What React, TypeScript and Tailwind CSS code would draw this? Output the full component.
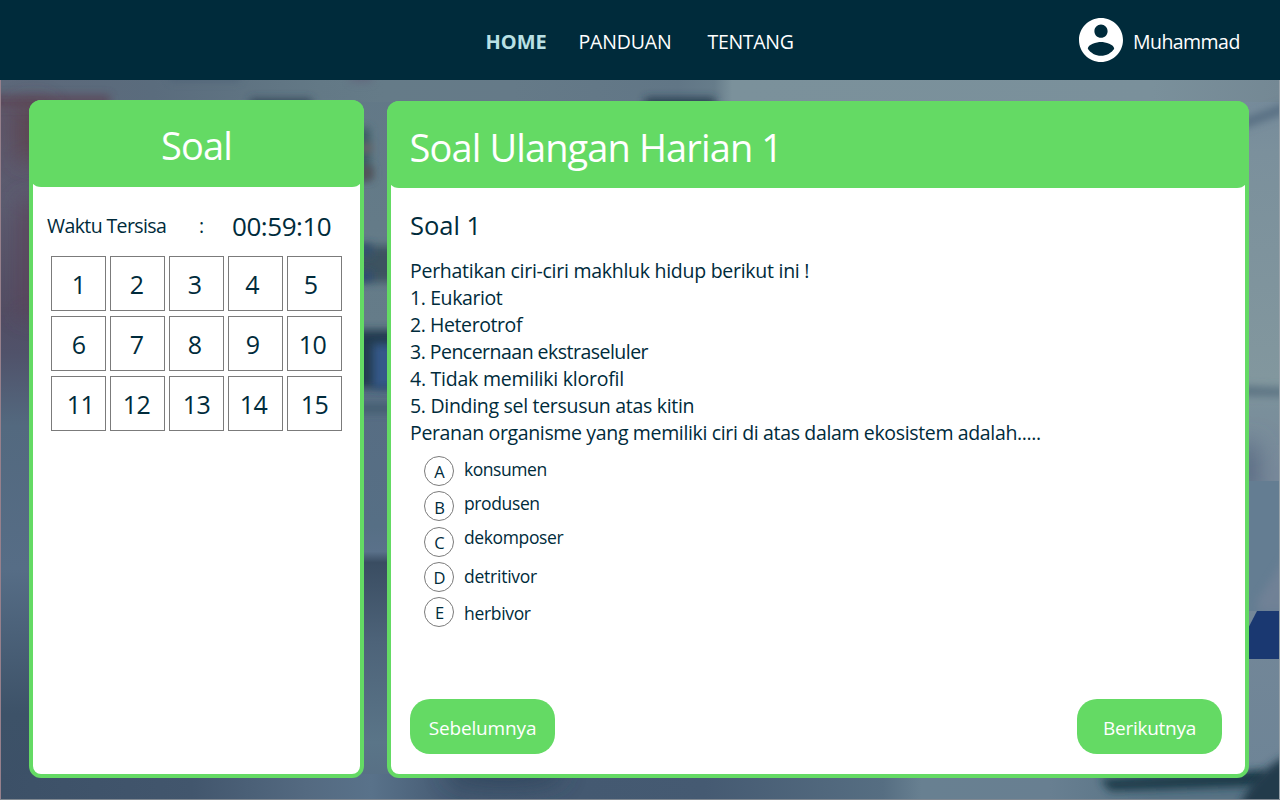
const numbers = [
  { n: '1', pad: '' },
  { n: '2', pad: 'pr-[2px]' },
  { n: '3', pad: 'pr-[4px]' },
  { n: '4', pad: 'pr-[7px]' },
  { n: '5', pad: 'pr-[8px]' },
  { n: '6', pad: '' },
  { n: '7', pad: 'pr-[2px]' },
  { n: '8', pad: 'pr-[4px]' },
  { n: '9', pad: 'pr-[6px]' },
  { n: '10', pad: 'pr-[4px]' },
  { n: '11', pad: 'pl-[4px]' },
  { n: '12', pad: 'pr-[2px]' },
  { n: '13', pad: '' },
  { n: '14', pad: 'pr-[4px]' },
  { n: '15', pad: '' },
];

const lines = [
  { t: 'Perhatikan ciri-ciri makhluk hidup berikut ini !', ls: 'tracking-[-0.27px]' },
  { t: '1. Eukariot', ls: 'tracking-[-0.4px]' },
  { t: '2. Heterotrof', ls: 'tracking-[-0.42px]' },
  { t: '3. Pencernaan ekstraseluler', ls: 'tracking-[-0.52px]' },
  { t: '4. Tidak memiliki klorofil', ls: 'tracking-[-0.24px]' },
  { t: '5. Dinding sel tersusun atas kitin', ls: 'tracking-[-0.3px]' },
  {
    t: 'Peranan organisme yang memiliki ciri di atas dalam ekosistem adalah.....',
    ls: 'tracking-[-0.35px]',
  },
];

const options = [
  { k: 'A', t: 'konsumen', ls: 'tracking-[-0.45px]', pad: 'pb-[4px]' },
  { k: 'B', t: 'produsen', ls: 'tracking-[-0.38px]', pad: 'pb-[7px]' },
  { k: 'C', t: 'dekomposer', ls: 'tracking-[-0.38px]', pad: 'pb-[9px]' },
  { k: 'D', t: 'detritivor', ls: 'tracking-[-0.24px]', pad: 'pb-[2px]' },
  { k: 'E', t: 'herbivor', ls: 'tracking-[-0.32px]', pad: 'pt-[2px]' },
];

function Backdrop() {
  return (
    <svg
      className="absolute inset-0 h-full w-full"
      viewBox="0 0 1280 720"
      preserveAspectRatio="none"
      aria-hidden="true"
    >
      <defs>
        <linearGradient id="left" x1="0" y1="0" x2="0" y2="1">
          <stop offset="0" stopColor="#5d6a7b" />
          <stop offset="0.05" stopColor="#5d5669" />
          <stop offset="0.17" stopColor="#5b5c70" />
          <stop offset="0.32" stopColor="#524d63" />
          <stop offset="0.38" stopColor="#50526a" />
          <stop offset="0.48" stopColor="#53697f" />
          <stop offset="0.68" stopColor="#566d86" />
          <stop offset="0.88" stopColor="#3d5268" />
          <stop offset="1" stopColor="#3c5067" />
        </linearGradient>
        <linearGradient id="mid" x1="0" y1="0" x2="0" y2="1">
          <stop offset="0" stopColor="#627887" />
          <stop offset="0.2" stopColor="#647b88" />
          <stop offset="0.35" stopColor="#657c89" />
          <stop offset="0.45" stopColor="#576d83" />
          <stop offset="0.62" stopColor="#566f85" />
          <stop offset="0.655" stopColor="#5a718a" />
          <stop offset="0.67" stopColor="#3a4d62" />
          <stop offset="0.78" stopColor="#4d6379" />
          <stop offset="0.92" stopColor="#5a7588" />
          <stop offset="1" stopColor="#566c83" />
        </linearGradient>
        <linearGradient id="right" x1="0" y1="0" x2="0" y2="1">
          <stop offset="0" stopColor="#74899a" />
          <stop offset="0.1" stopColor="#7b909c" />
          <stop offset="0.42" stopColor="#82979e" />
          <stop offset="0.46" stopColor="#7a8f9b" />
          <stop offset="0.55" stopColor="#78899a" />
          <stop offset="1" stopColor="#6d8496" />
        </linearGradient>
        <linearGradient id="top" x1="0" y1="0" x2="1" y2="0">
          <stop offset="0" stopColor="#5d687a" />
          <stop offset="0.12" stopColor="#5a6c7d" />
          <stop offset="0.25" stopColor="#637986" />
          <stop offset="0.3" stopColor="#657b88" />
          <stop offset="0.4" stopColor="#657a88" />
          <stop offset="0.53" stopColor="#617686" />
          <stop offset="0.558" stopColor="#667c8a" />
          <stop offset="0.572" stopColor="#7b919b" />
          <stop offset="0.9" stopColor="#7a909b" />
          <stop offset="1" stopColor="#748894" />
        </linearGradient>
        <linearGradient id="bottom" x1="0" y1="0" x2="1" y2="0">
          <stop offset="0" stopColor="#3c5067" />
          <stop offset="0.15" stopColor="#42566d" />
          <stop offset="0.24" stopColor="#546a81" />
          <stop offset="0.29" stopColor="#59728a" />
          <stop offset="0.36" stopColor="#435870" />
          <stop offset="0.55" stopColor="#455a72" />
          <stop offset="0.69" stopColor="#566e82" />
          <stop offset="0.72" stopColor="#688091" />
          <stop offset="0.82" stopColor="#687f91" />
          <stop offset="0.9" stopColor="#587385" />
          <stop offset="1" stopColor="#587385" />
        </linearGradient>
        <filter id="b3" filterUnits="userSpaceOnUse" x="-40" y="-40" width="1360" height="800">
          <feGaussianBlur stdDeviation="4.5" />
        </filter>
        <filter id="b8" filterUnits="userSpaceOnUse" x="-60" y="-40" width="1400" height="800">
          <feGaussianBlur stdDeviation="12" />
        </filter>
      </defs>
      <rect width="1280" height="720" fill="#607687" />
      <rect width="200" height="720" fill="url(#left)" />
      <rect x="300" width="200" height="720" fill="url(#mid)" />
      <rect x="1150" width="130" height="720" fill="url(#right)" />
      <rect width="1280" height="22" fill="url(#top)" />
      <rect y="694" width="1280" height="26" fill="url(#bottom)" />

      <rect x="-20" y="15" width="130" height="12" fill="#5c4456" opacity=".8" filter="url(#b3)" />
      <rect x="18" y="25" width="30" height="55" fill="#5b4048" opacity=".8" filter="url(#b8)" />
      <rect x="20" y="120" width="30" height="115" fill="#5c4259" opacity=".8" filter="url(#b8)" />
      <rect x="250" y="19" width="62" height="14" fill="#304659" filter="url(#b3)" />
      <rect x="645" y="18" width="70" height="14" fill="#283c4f" filter="url(#b3)" />
      <rect x="170" y="-8" width="70" height="9" fill="#4a5d74" opacity=".6" filter="url(#b3)" />
      <rect x="350" y="-8" width="22" height="10" fill="#64627a" opacity=".7" filter="url(#b3)" />

      <rect x="340" y="48" width="30" height="52" fill="#3b5c64" filter="url(#b3)" />
      <rect x="345" y="64" width="27" height="8" fill="#7c6668" opacity=".8" filter="url(#b3)" />
      <rect x="345" y="86" width="28" height="14" fill="#555159" filter="url(#b3)" />
      <rect x="340" y="166" width="70" height="36" fill="#3c5260" filter="url(#b3)" />
      <rect x="340" y="164" width="32" height="12" fill="#334f70" filter="url(#b3)" />
      <rect x="340" y="192" width="32" height="9" fill="#2c4877" filter="url(#b3)" />
      <rect x="340" y="250" width="70" height="58" fill="#203a4f" filter="url(#b3)" />
      <rect x="373" y="264" width="50" height="44" fill="#355889" filter="url(#b3)" />
      <rect x="340" y="325" width="70" height="7" fill="#3c586a" filter="url(#b3)" />

      <path d="M1235 42 L1290 22 L1290 31 L1235 51Z" fill="#536b7f" filter="url(#b3)" />
      <path d="M1230 306 L1290 309 L1290 316 L1230 315Z" fill="#556d7e" filter="url(#b3)" />
      <rect x="1230" y="365" width="28" height="50" fill="#586b82" filter="url(#b8)" />
      <rect x="1240" y="401" width="40" height="130" fill="#647d92" />
      <path d="M1258 520 L1290 470 L1290 532 L1258 532Z" fill="#768398" opacity=".7" filter="url(#b3)" />
      <path d="M1240 564 L1257 531 L1280 531 L1280 579 L1240 579Z" fill="#1a3871" />
      <path d="M1100 699 L1265 690 L1265 706 L1110 711Z" fill="#1d3b49" filter="url(#b3)" />
      <path d="M1238 730 Q1252 692 1290 674 L1290 730Z" fill="#233a4b" filter="url(#b3)" />
      <ellipse cx="505" cy="693" rx="60" ry="12" fill="#2c4156" opacity=".8" filter="url(#b8)" />

      <rect width="1" height="720" fill="#96808c" />
      <rect x="1279" width="1" height="720" fill="#98a3aa" />
      <rect y="719" width="1280" height="1" fill="#808891" />
    </svg>
  );
}

export default function App() {
  return (
    <div className="flex h-[800px] w-[1280px] flex-col overflow-hidden font-['Open_Sans','Noto_Sans',sans-serif] text-[#002b3b]">
      <header className="flex h-20 shrink-0 items-center bg-[#002b3b] text-[19.5px] text-white">
        <nav className="ml-[485.5px] flex w-[593.5px] items-center pt-[3px]">
          <a className="w-[93px] text-[20px] font-bold tracking-[-0.03px] text-[#b9e0e4]">HOME</a>
          <a className="w-[129px] tracking-[-0.15px]">PANDUAN</a>
          <a className="tracking-[-0.3px]">TENTANG</a>
        </nav>
        <svg className="h-11 w-11" viewBox="2 2 20 20" fill="white" aria-hidden="true">
          <path d="M12 2C6.48 2 2 6.48 2 12s4.48 10 10 10 10-4.48 10-10S17.52 2 12 2zm0 3c1.66 0 3 1.34 3 3s-1.34 3-3 3-3-1.34-3-3 1.34-3 3-3zm0 14.2c-2.5 0-4.71-1.28-6-3.22.03-1.99 4-3.08 6-3.08 1.99 0 5.97 1.09 6 3.08-1.29 1.94-3.5 3.22-6 3.22z" />
        </svg>
        <span className="ml-[10px] pt-[3px] tracking-[-0.55px]">Muhammad</span>
      </header>

      <main className="relative h-[720px]">
        <Backdrop />
        <div className="relative flex pl-[29px]">
          <aside className="mt-5 h-[678px] w-[335px] rounded-xl border-4 border-[#64da64] bg-white">
            <h2 className="-mx-1 -mt-1 flex h-[87px] items-center justify-center rounded-xl bg-[#64da64] pt-[3px] text-[38px] tracking-[-0.8px] text-white">
              Soal
            </h2>
            <div className="flex h-[69px] items-center pt-[8px] pl-[14px]">
              <span className="w-[152px] pt-px text-[19.5px] tracking-[-0.6px]">Waktu Tersisa</span>
              <span className="w-[33px] pt-px text-[19.5px]">:</span>
              <span className="pt-px text-[26px] tracking-[-0.45px]">00:59:10</span>
            </div>
            <div className="ml-[18px] grid w-[291px] grid-cols-5 gap-x-1 gap-y-[5px]">
              {numbers.map(({ n, pad }) => (
                <button
                  key={n}
                  className={`flex h-[55px] w-[55px] items-center justify-center border border-[#7b7b7b] text-[25px] leading-none tracking-[-0.6px] ${pad}`}
                >
                  <span className="pt-[2px]">{n}</span>
                </button>
              ))}
            </div>
          </aside>

          <section className="mt-[21px] ml-[23px] flex h-[677px] w-[862px] flex-col rounded-xl border-4 border-[#64da64] bg-white">
            <h1 className="-mx-1 -mt-1 flex h-[87px] shrink-0 items-center rounded-xl bg-[#64da64] pt-[5px] pl-[22.5px] text-[38px] tracking-[-0.88px] text-white">
              Soal Ulangan Harian 1
            </h1>
            <div className="flex grow flex-col pr-[23px] pl-[19px]">
              <h2 className="mt-[19px] h-9 text-[25.5px] leading-9">Soal 1</h2>
              <div className="mt-[14px] text-[19.5px] leading-[27px]">
                {lines.map(({ t, ls }) => (
                  <p key={t} className={`whitespace-nowrap ${ls}`}>
                    {t}
                  </p>
                ))}
              </div>
              <ul className="mt-[10px] ml-[14px] flex flex-col gap-[5.25px]">
                {options.map(({ k, t, ls, pad }) => (
                  <li key={k} className="flex h-[30px] items-center">
                    <span className="mr-[10px] flex h-[30px] w-[30px] shrink-0 items-center justify-center rounded-full border border-[#7b7b7b] pt-[3px] pl-px text-[16.5px] leading-none">
                      {k}
                    </span>
                    <span className={`text-[17.5px] leading-[18px] ${ls} ${pad}`}>{t}</span>
                  </li>
                ))}
              </ul>
              <div className="mt-auto mb-5 flex justify-between text-[19px] text-white">
                <button className="h-[55px] w-[145px] rounded-[20px] bg-[#64da64] pt-[4px] tracking-[-0.15px]">
                  Sebelumnya
                </button>
                <button className="h-[55px] w-[145px] rounded-[20px] bg-[#64da64] pt-[4px] tracking-[-0.26px]">
                  Berikutnya
                </button>
              </div>
            </div>
          </section>
        </div>
      </main>
    </div>
  );
}
